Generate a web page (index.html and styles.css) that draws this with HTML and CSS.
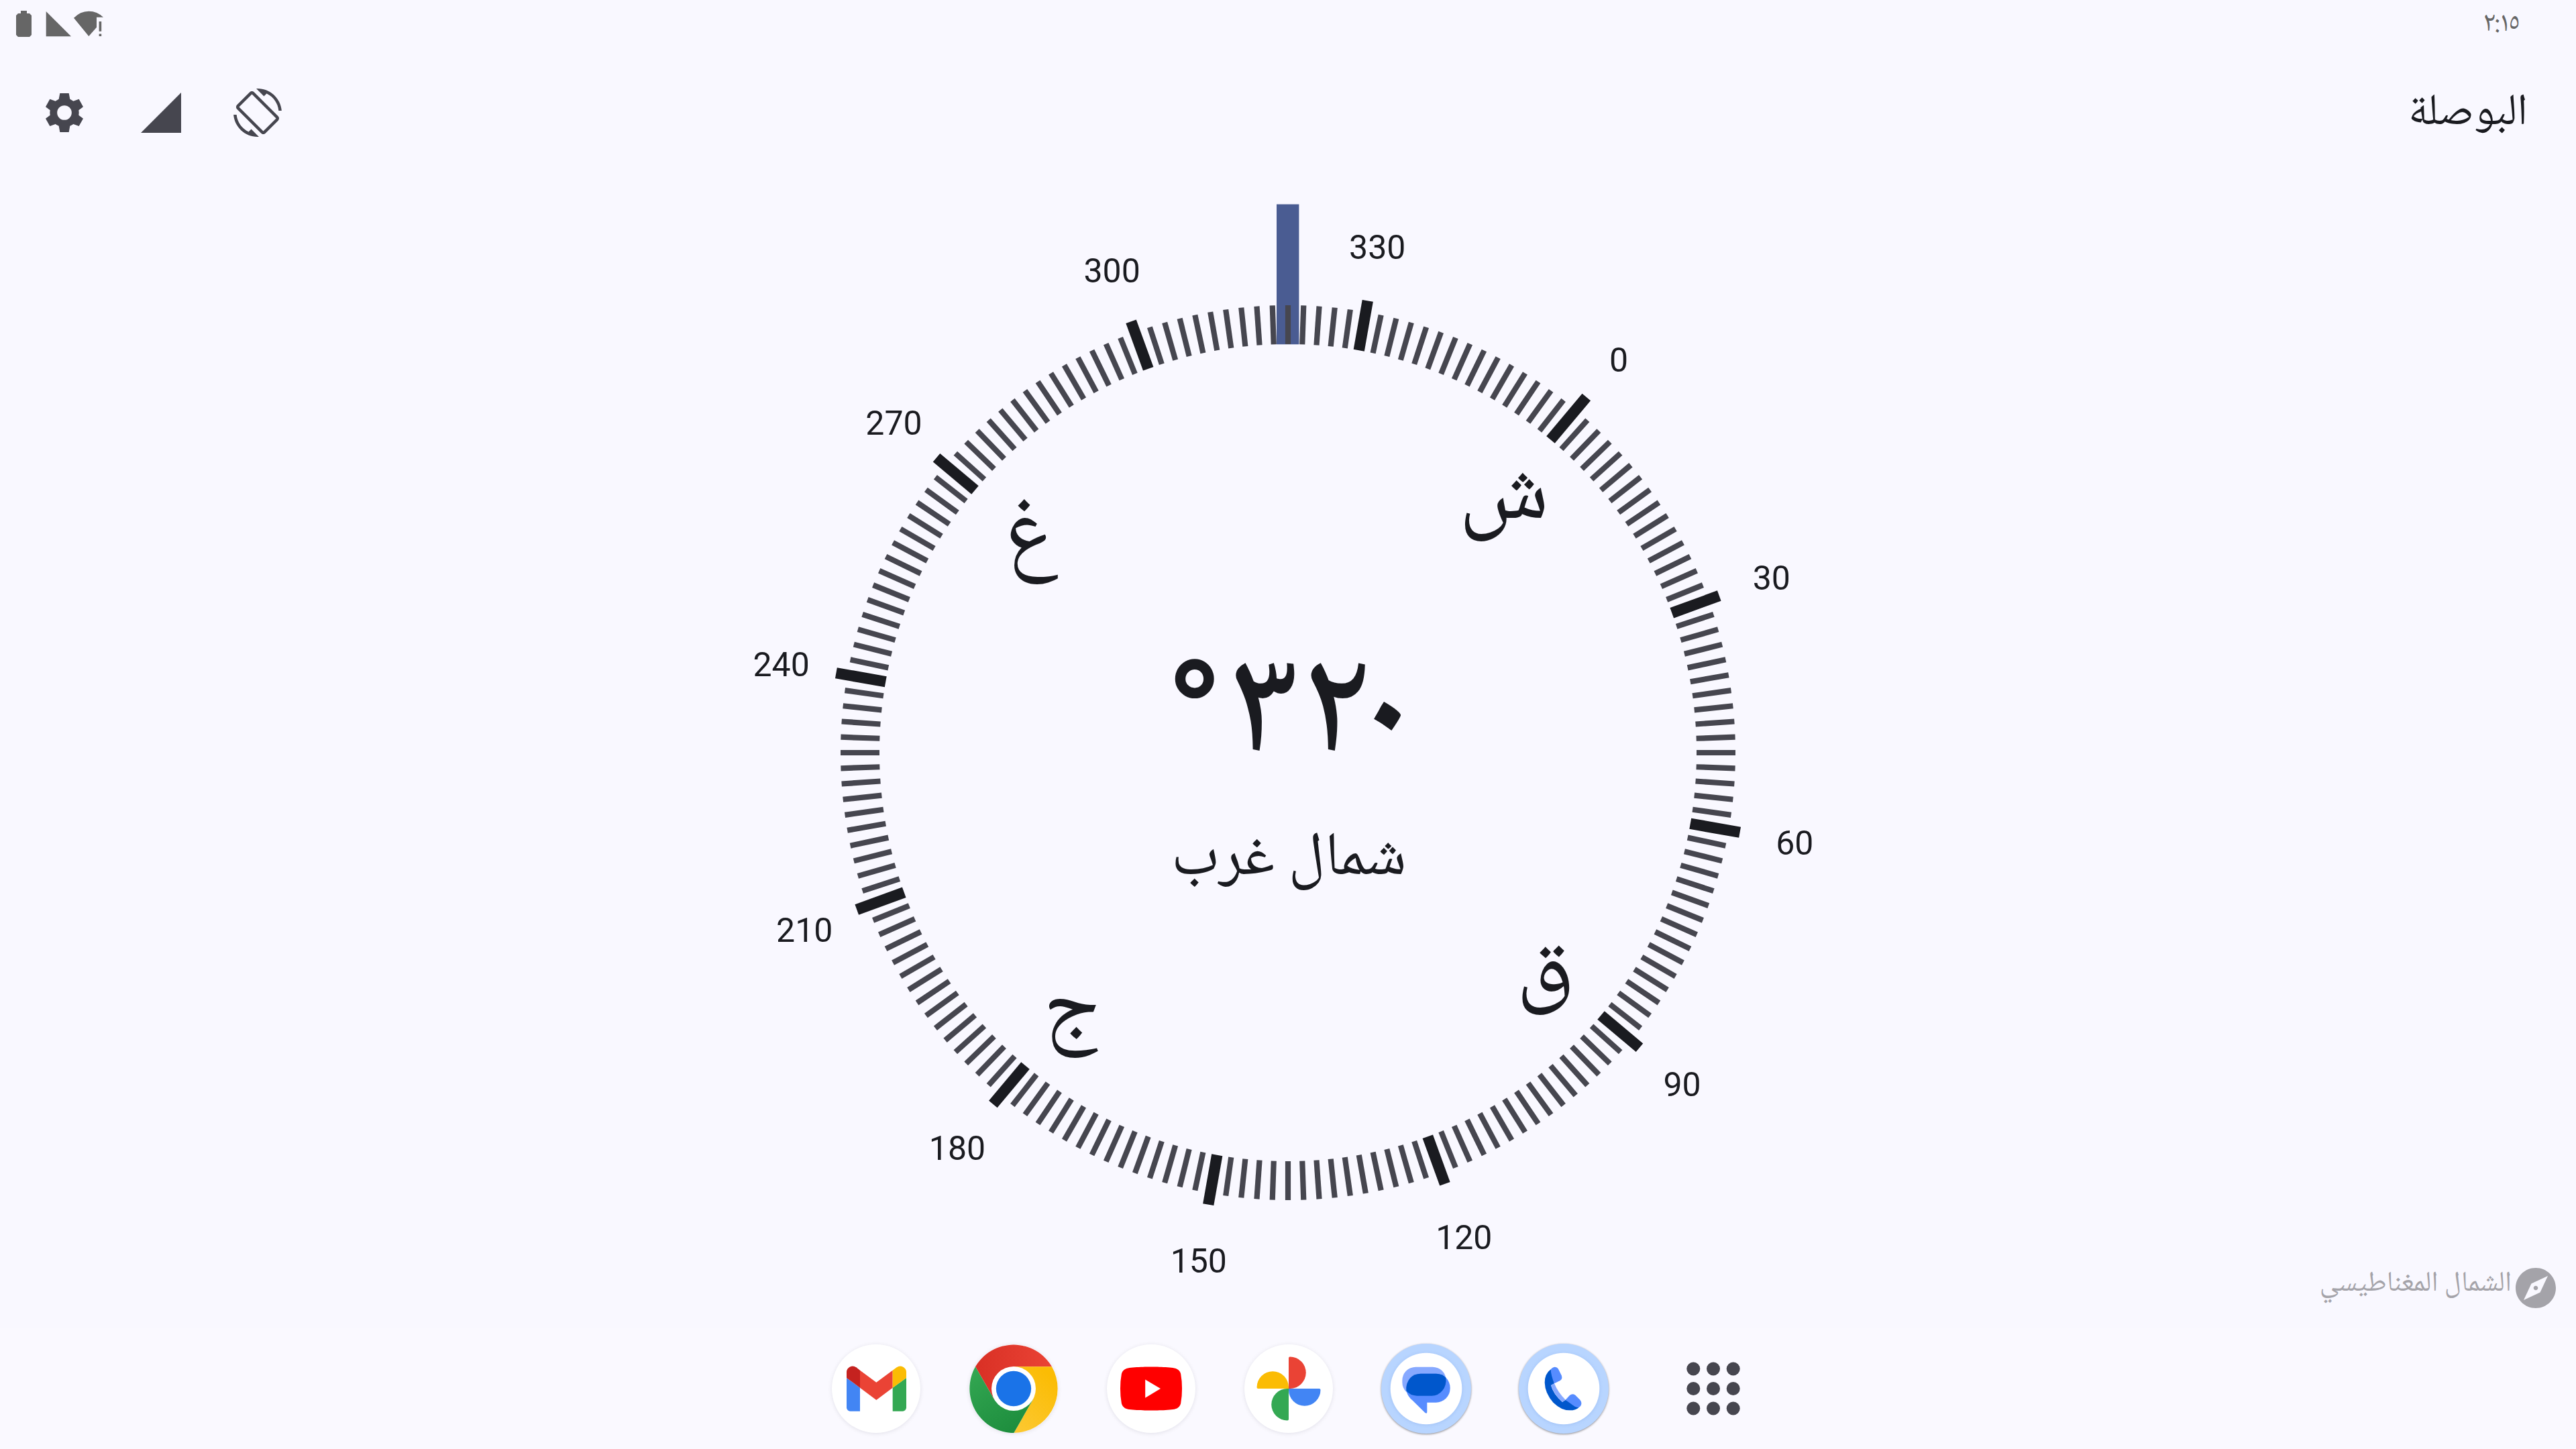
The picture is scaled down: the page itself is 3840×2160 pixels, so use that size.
FILE: index.html
```html
<!DOCTYPE html>
<html lang="ar" dir="rtl">
<head>
<meta charset="utf-8">
<title>البوصلة</title>
<link rel="stylesheet" href="styles.css">
</head>
<body>
<header class="status-bar">
  <svg class="clock" viewBox="0 0 65 72" width="65" height="72">
    <text x="11.500 28.200 34.600 48.500" y="46">٢:١٥</text>
  </svg>
  <svg class="status-icons" viewBox="0 0 160 72" width="160" height="72">
    <path d="M31 16h9v4h4l3 3v29l-3 3H27l-3-3V23l3-3h4z"/>
    <path d="M68.700 17v37.200H106z"/>
    <path d="M110 26.800Q119.500 16.700 132.300 16.700Q145 16.700 154 25.800H144V40.700L132.300 54z"/>
    <path d="M147.600 32h3.600v14.700h-3.600zM147.600 50.600h3.600V54h-3.600z"/>
  </svg>
</header>

<nav class="toolbar">
  <h1 class="title">البوصلة</h1>
  <div class="actions">
    <svg class="action" viewBox="0 0 24 24"><path d="M16.480 2.520c3.270 1.550 5.610 4.720 5.970 8.480h1.500C23.440 4.840 18.290 0 12 0l-.66.03 3.810 3.810 1.330-1.320zm-6.250-.77c-.59-.59-1.540-.59-2.120 0L1.750 8.110c-.59.59-.59 1.540 0 2.120l12.020 12.020c.59.59 1.540.59 2.120 0l6.360-6.360c.59-.59.59-1.540 0-2.120L10.230 1.750zm4.600 19.440L2.810 9.170l6.360-6.360 12.020 12.020-6.360 6.360zm-7.310.29C4.250 19.940 1.910 16.760 1.550 13H.05C.56 19.160 5.710 24 12 24l.66-.03-3.810-3.810-1.330 1.320z"/></svg>
    <svg class="action" viewBox="0 0 24 24"><path d="M2 22h20V2z"/></svg>
    <svg class="action" viewBox="180 396 216 216"><path fill-rule="evenodd" d="M268 417H308L313 443Q321 447 328 452L353 443L372 478L352 493Q354 504 352 515L372 530L353 564L328 555Q321 560 313 563L308 591H268L263 563Q255 560 248 555L223 564L204 530L224 515Q222 504 224 493L204 478L223 443L248 452Q255 447 263 443ZM288 471.500a32.500 32.500 0 1 0 0 65a32.500 32.500 0 1 0 0-65z"/></svg>
  </div>
</nav>

<main class="stage">
  <svg class="compass" viewBox="0 264 3840 1715" direction="ltr">
    <defs><clipPath id="west-box"><rect x="1480" y="700" width="96.800" height="220"/></clipPath></defs>
    <rect class="needle" x="1903" y="304.500" width="33.400" height="208.800"/>
    <g id="ticks"></g>
    <g id="labels"></g>
    <text class="cardinal" x="2175" y="772">ش</text>
    <text class="cardinal" x="2260.600" y="1478.400">ق</text>
    <text class="cardinal" x="1555" y="1539.400">ج</text>
    <text class="cardinal" x="1497" y="833.200" clip-path="url(#west-box)">غ</text>
    <text class="heading" x="1833.300 1941 2013.600" y="1119">٣٢٠</text>
    <text class="degree-sign" x="1738" y="1141.500">°</text>
    <text class="direction-name" x="1745.900" y="1303.300">شمال غرب</text>
  </svg>
  <div class="north-note">
    <svg class="note-icon" viewBox="0 0 24 24"><path d="M12 10.900c-.61 0-1.100.49-1.100 1.100s.49 1.100 1.100 1.100c.61 0 1.100-.49 1.100-1.100s-.49-1.100-1.100-1.100zM12 2C6.480 2 2 6.480 2 12s4.480 10 10 10 10-4.480 10-10S17.520 2 12 2zm2.190 12.190L6 18l3.810-8.190L18 6l-3.810 8.190z"/></svg>
    <span class="note-text">الشمال المغناطيسي</span>
  </div>
</main>

<footer class="dock" dir="ltr">
  <svg class="app plain" viewBox="30 40 396 396">
    <path fill="#4285f4" d="M96 190L156 234V339H112a16 16 0 0 1-16-16z"/>
    <path fill="#34a853" d="M363 190L302 234V339H347a16 16 0 0 0 16-16z"/>
    <path fill="#c5221f" d="M96 190V164a27 27 0 0 1 43-21L156 156V234z"/>
    <path fill="#ea4335" d="M156 156L229 210L302 156V234L229 289L156 234z"/>
    <path fill="#fbbc04" d="M302 156L320 143a27 27 0 0 1 43 21V190L302 234z"/>
  </svg>
  <svg class="app plain" viewBox="643 40 396 396">
    <defs>
      <linearGradient id="cr" x1="0" x2="1"><stop offset="0" stop-color="#d93025"/><stop offset="1" stop-color="#ea4335"/></linearGradient>
      <linearGradient id="cg" x1=".6" y1="1" x2="0" y2="0"><stop offset="0" stop-color="#1e8e3e"/><stop offset="1" stop-color="#34a853"/></linearGradient>
      <linearGradient id="cy" x1="0" y1="1" x2=".6" y2="0"><stop offset="0" stop-color="#fcc934"/><stop offset="1" stop-color="#fbbc04"/></linearGradient>
    </defs>
    <path fill="url(#cr)" d="M755 287.500L670 140A198 198 0 0 1 1012 140H841V238z"/>
    <path fill="url(#cy)" d="M841 140H1012A198 198 0 0 1 842 436L927 287.500L841 238z"/>
    <path fill="url(#cg)" d="M842 436A198 198 0 0 1 670 140L755 287.500L841 238L927 287.500z"/>
    <circle cx="841" cy="238" r="99" fill="#fff"/>
    <circle cx="841" cy="238" r="78.500" fill="#1a73e8"/>
  </svg>
  <svg class="app plain" viewBox="0 0 132 132">
    <path fill="#f00" transform="translate(20 20) scale(3.835)" d="M23.500 6.200a3 3 0 0 0-2.100-2.100C19.500 3.500 12 3.500 12 3.500s-7.500 0-9.400.6A3 3 0 0 0 .5 6.200 31 31 0 0 0 0 12a31 31 0 0 0 .5 5.800 3 3 0 0 0 2.100 2.100c1.900.6 9.400.6 9.400.6s7.500 0 9.400-.6a3 3 0 0 0 2.100-2.100A31 31 0 0 0 24 12a31 31 0 0 0-.5-5.800z"/>
    <path fill="#fff" d="M57.200 52.500V79.700L80 66z"/>
  </svg>
  <svg class="app plain" viewBox="0 0 132 132">
    <defs><path id="petal" d="M66 66V20.500a2 2 0 0 1 2-2a23.750 23.750 0 0 1 0 47.500z"/></defs>
    <use href="#petal" fill="#ea4335"/>
    <use href="#petal" fill="#4285f4" transform="rotate(90 66 66)"/>
    <use href="#petal" fill="#34a853" transform="rotate(180 66 66)"/>
    <use href="#petal" fill="#fbbc04" transform="rotate(270 66 66)"/>
  </svg>
  <svg class="app ringed" viewBox="29 40 396 396">
    <circle class="ring" cx="227" cy="238" r="201"/>
    <circle class="disc" cx="227" cy="238" r="160"/>
    <rect x="120" y="141" width="196" height="129" rx="60" fill="#87a9ff"/>
    <rect x="138" y="171" width="196" height="129" rx="63" fill="#578cff"/>
    <path fill="#578cff" d="M140 245Q143 265 158 283L222 346Q231 352 231 342V290z"/>
    <path fill="#0057cc" d="M202 171H272Q300 171 315 189Q319 222 300 246Q280 270 252 270H186Q156 270 138 248Q135 215 156 190Q175 171 202 171z"/>
  </svg>
  <svg class="app ringed" viewBox="644 40 396 396">
    <circle class="ring" cx="842" cy="238" r="201"/>
    <circle class="disc" cx="842" cy="238" r="160"/>
    <path fill="#0057cc" d="M784 152Q757 172 757 211Q758 258 795 300Q832 336 870 335Q896 335 911 321L850 288L836 298Q795 262 785 223L800 215z"/>
    <path fill="#578cff" d="M784 152Q793 141 803 141Q812 141 817 149L832 179Q838 194 826 202L800 215Q785 180 784 152z"/>
    <path fill="#87a9ff" d="M785 223L800 215Q816 255 850 288L836 298Q797 262 785 223z"/>
    <path fill="#578cff" d="M850 288L868 269Q880 258 894 267L915 288Q925 301 919 313Q914 323 903 322Q893 320 884 313z"/>
  </svg>
  <svg class="app all-apps" viewBox="0 0 132 132">
    <g fill="#46464f">
      <circle cx="36.300" cy="36.500" r="10"/><circle cx="66" cy="36.500" r="10"/><circle cx="95.700" cy="36.500" r="10"/>
      <circle cx="36.300" cy="66" r="10"/><circle cx="66" cy="66" r="10"/><circle cx="95.700" cy="66" r="10"/>
      <circle cx="36.300" cy="95.500" r="10"/><circle cx="66" cy="95.500" r="10"/><circle cx="95.700" cy="95.500" r="10"/>
    </g>
  </svg>
</footer>
<script src="compass.js"></script>
</body>
</html>
```
FILE: styles.css
```css
* { box-sizing: border-box; }

html, body { margin: 0; height: 100%; }

body {
  display: flex;
  flex-direction: column;
  background: #f9f8ff;
  color: #1a1b20;
  font-family: "Noto Naskh Arabic", Roboto, sans-serif;
  overflow: hidden;
}

.status-bar {
  display: flex;
  justify-content: space-between;
  height: 72px;
  padding-right: 85px;
}

.clock {
  direction: ltr;
  font-size: 42px;
  fill: #666;
}

.status-icons { fill: #666; }

.toolbar {
  display: flex;
  justify-content: space-between;
  align-items: center;
  height: 192px;
  padding: 0 72px 0 60px;
}

.title {
  margin: 0;
  padding-top: 5px;
  font-size: 66px;
  font-weight: 400;
  line-height: 112px;
}

.actions { display: flex; gap: 72px; }

.action { width: 72px; height: 72px; fill: #46464f; }

.stage {
  display: grid;
  flex: 1;
  grid-template: 100% / 100%;
}

.compass {
  grid-area: 1 / 1;
  width: 100%;
  height: 100%;
  direction: ltr;
  fill: #1a1b20;
}

.needle { fill: #4a5c92; }
.tick { stroke: #46464f; stroke-width: 8.200; }
.tick-major { stroke: #1a1b20; stroke-width: 16.400; }
.bearing { font: 50px Roboto, sans-serif; text-anchor: middle; }
.cardinal { font-size: 132px; }
.heading { font-size: 226px; font-weight: 500; }
.degree-sign { font: 700 220px Roboto, sans-serif; }
.direction-name { font-size: 91.800px; }

.north-note {
  grid-area: 1 / 1;
  display: flex;
  align-self: end;
  justify-self: start;
  align-items: center;
  padding: 0 24px 23px 0;
  color: #a4a3a9;
}

.note-icon { width: 72px; height: 72px; fill: currentColor; }

.note-text {
  padding-bottom: 10px;
  font-size: 42.200px;
  line-height: 60px;
}

.dock {
  display: flex;
  align-items: center;
  gap: 73px;
  height: 181px;
  padding-left: 1239.500px;
  background: #faf9ff;
}

.app { width: 132px; height: 132px; border-radius: 50%; overflow: visible; }
.plain { background: #fff; box-shadow: 0 1px 6px rgba(0, 0, 40, .1); }
.ringed { filter: drop-shadow(0 1px 1.500px rgba(0, 0, 0, .45)); }
.ring { fill: #b8d5ff; }
.disc { fill: #fff; filter: drop-shadow(0 2px 8px rgba(60, 110, 200, .2)); }
.all-apps { margin-left: 18px; }
```
FILE: compass.js
```js
const SVG_NS = 'http://www.w3.org/2000/svg';
const CENTER = { x: 1920, y: 1122 };
const HEADING = 320;
const INNER_RADIUS = 609;
const LABEL_RADIUS = 767;

const ticks = document.getElementById('ticks');
const labels = document.getElementById('labels');

// The north mark is the longest, then every 30 degrees, then the minor marks.
function outerRadius(bearing) {
  if (bearing === 0) return 692;
  return bearing % 30 === 0 ? 684 : 667;
}

for (let bearing = 0; bearing < 360; bearing += 2) {
  const major = bearing % 30 === 0;
  const angle = bearing - HEADING;
  const tick = document.createElementNS(SVG_NS, 'line');
  tick.setAttribute('class', major ? 'tick-major' : 'tick');
  tick.setAttribute('x1', CENTER.x);
  tick.setAttribute('x2', CENTER.x);
  tick.setAttribute('y1', CENTER.y - outerRadius(bearing));
  tick.setAttribute('y2', CENTER.y - INNER_RADIUS);
  tick.setAttribute('transform', `rotate(${angle} ${CENTER.x} ${CENTER.y})`);
  ticks.append(tick);

  if (major) {
    const rad = angle * Math.PI / 180;
    const label = document.createElementNS(SVG_NS, 'text');
    label.setAttribute('class', 'bearing');
    label.setAttribute('x', CENTER.x + LABEL_RADIUS * Math.sin(rad));
    label.setAttribute('y', CENTER.y - LABEL_RADIUS * Math.cos(rad) + 19.3);
    label.textContent = bearing;
    labels.append(label);
  }
}
```
